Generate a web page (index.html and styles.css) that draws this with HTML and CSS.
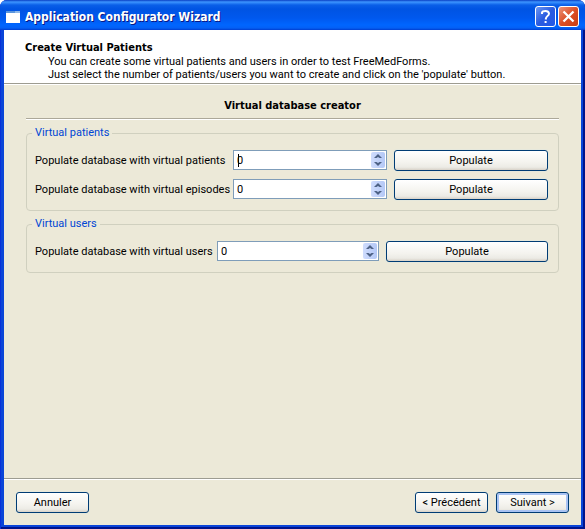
FILE: index.html
```html
<!DOCTYPE html>
<html lang="en">
<head>
<meta charset="utf-8">
<title>Application Configurator Wizard</title>
<link rel="stylesheet" href="styles.css">
</head>
<body>
<div class="window">
  <header class="titlebar">
    <svg class="app-icon" width="16" height="16" viewBox="0 0 16 16" aria-hidden="true">
      <rect x="1" y="2" width="14" height="12" fill="#fff"/>
      <rect x="1" y="2" width="14" height="2" fill="#8fb8e8"/>
      <rect x="1" y="2" width="9" height="2" fill="#5a95dd"/>
    </svg>
    <h1>Application Configurator Wizard</h1>
    <button class="caption help" type="button" aria-label="Help">
      <svg width="19" height="19" viewBox="0 0 19 19"><path d="M6 7V5.500Q6.500 4 9.500 4T13 6.500Q13 8 11.500 9T9.600 12.500M9.600 14v2" fill="none" stroke="#fff" stroke-width="2"/></svg>
    </button>
    <button class="caption close" type="button" aria-label="Close">
      <svg width="19" height="19" viewBox="0 0 19 19"><path d="M4.500 4.500l10 10M14.500 4.500l-10 10" stroke="#fff" stroke-width="2.300"/></svg>
    </button>
  </header>
  <form class="client">
    <div class="banner">
      <h2>Create Virtual Patients</h2>
      <p>You can create some virtual patients and users in order to test FreeMedForms.<br>Just select the number of patients/users you want to create and click on the 'populate' button.</p>
    </div>
    <main class="page">
      <h3>Virtual database creator</h3>
      <hr>
      <fieldset>
        <legend>Virtual patients</legend>
        <div class="rows patients">
          <label for="patients">Populate database with virtual patients</label>
          <div class="spin">
            <span class="caret"></span>
            <input id="patients" type="number" min="0" value="0">
            <button class="stepper" type="button" aria-label="Step patients"><svg width="14" height="16" viewBox="0 0 14 16"><path d="M3 6L7 2l4 4H8.500L7 5 5.500 6zM3 10l4 4 4-4H8.500L7 11 5.500 10z" fill="#4d6185"/></svg></button>
          </div>
          <button class="push" type="button">Populate</button>
          <label for="episodes">Populate database with virtual episodes</label>
          <div class="spin">
            <input id="episodes" type="number" min="0" value="0">
            <button class="stepper" type="button" aria-label="Step episodes"><svg width="14" height="16" viewBox="0 0 14 16"><path d="M3 6L7 2l4 4H8.500L7 5 5.500 6zM3 10l4 4 4-4H8.500L7 11 5.500 10z" fill="#4d6185"/></svg></button>
          </div>
          <button class="push" type="button">Populate</button>
        </div>
      </fieldset>
      <fieldset>
        <legend>Virtual users</legend>
        <div class="rows users">
          <label for="users">Populate database with virtual users</label>
          <div class="spin">
            <input id="users" type="number" min="0" value="0">
            <button class="stepper" type="button" aria-label="Step users"><svg width="14" height="16" viewBox="0 0 14 16"><path d="M3 6L7 2l4 4H8.500L7 5 5.500 6zM3 10l4 4 4-4H8.500L7 11 5.500 10z" fill="#4d6185"/></svg></button>
          </div>
          <button class="push" type="button">Populate</button>
        </div>
      </fieldset>
    </main>
    <footer class="actions">
      <button class="push cancel" type="button">Annuler</button>
      <button class="push" type="button">&lt; Précédent</button>
      <button class="push default" type="button">Suivant &gt;</button>
    </footer>
  </form>
</div>
</body>
</html>
```
FILE: styles.css
```css
* {
  box-sizing: border-box;
}

body {
  margin: 0;
  background: #fff;
  color: #000;
  font: 11px/13px Tahoma, Roboto, sans-serif;
}

h1, h2, h3, p {
  margin: 0;
}

button, input {
  font: inherit;
  color: inherit;
}

.window {
  display: flex;
  flex-direction: column;
  min-height: 100vh;
  padding: 0 4px 4px;
  border-radius: 7px 7px 0 0;
  background: #0a45d8;
  box-shadow: inset 1px 0 #0831d9, inset -2px -2px #00138c;
  overflow: hidden;
}

.titlebar {
  display: flex;
  align-items: center;
  gap: 4px;
  height: 30px;
  margin: 0 -4px;
  padding: 3px 5px 0 5px;
  background: linear-gradient(#0a3fc4 0, #3d95ff 2px, #0a5fe8 5px, #0054e3 9px, #0058ee 18px, #0066ff 25px, #0460f5 28px, #003dd0 30px);
}

.app-icon {
  flex: none;
}

.titlebar h1 {
  flex: 1;
  color: #fff;
  font: bold 12px/16px "Trebuchet MS", "DejaVu Sans Condensed", sans-serif;
  text-shadow: 1px 1px #0a1883;
  white-space: nowrap;
}

.caption {
  width: 21px;
  height: 21px;
  padding: 0;
  border: 1px solid #fff;
  border-radius: 3px;
  background: linear-gradient(135deg, #6c97f2, #2a5be0 50%, #2358e8);
}

.caption svg {
  display: block;
}

.close {
  margin-right: 1px;
  margin-left: -2px;
  background: linear-gradient(135deg, #ec9379, #dc4f27 50%, #c93d12);
}

.client {
  display: flex;
  flex: 1;
  flex-direction: column;
  background: #ece9d8;
}

.banner {
  padding: 11px 21px 2px;
  border-bottom: 1px solid #9d9c91;
  background: #fff;
  box-shadow: 0 1px #fff;
}

.banner h2 {
  font: bold 11px/14px Tahoma, "DejaVu Sans Condensed", sans-serif;
}

.banner p {
  padding-left: 23px;
  white-space: nowrap;
}

.page {
  flex: 1;
  padding: 14px 22px;
}

.page h3 {
  font: bold 11px/15px Tahoma, "DejaVu Sans Condensed", sans-serif;
  text-align: center;
}

hr {
  height: 2px;
  margin: 5px 0 6px;
  border: 0;
  border-top: 1px solid #aca899;
  border-bottom: 1px solid #fff;
}

fieldset {
  min-width: 0;
  margin: 0 0 6px;
  padding: 10px 10px 10px 8px;
  border: 1px solid #d0d0bf;
  border-radius: 4px;
}

legend {
  height: 14px;
  margin-left: -3px;
  padding: 0 3px;
  color: #0046d5;
  line-height: 14px;
}

.rows {
  display: grid;
  gap: 8px 7px;
  align-items: start;
}

.rows label {
  line-height: 21px;
  white-space: nowrap;
}

.patients {
  grid-template-columns: 191px minmax(0, 1fr) minmax(0, 1fr);
}

.users {
  grid-template-columns: 175px minmax(0, 1fr) minmax(0, 1fr);
}

.spin {
  position: relative;
  display: flex;
  height: 20px;
  padding: 1px;
  border: 1px solid #7f9db9;
  background: #fff;
}

.spin input {
  flex: 1;
  min-width: 0;
  padding: 0 2px;
  border: 0;
  outline: 0;
  background: none;
  appearance: textfield;
}

.spin input::-webkit-inner-spin-button {
  appearance: none;
}

.caret {
  position: absolute;
  top: 3px;
  left: 4px;
  width: 1px;
  height: 13px;
  background: #000;
}

.stepper {
  flex: none;
  width: 14px;
  height: 16px;
  padding: 0;
  border: 0;
  border-radius: 2px;
  background: linear-gradient(90deg, #cfdcfd, #b4c8f6);
}

.stepper svg {
  display: block;
}

.push {
  height: 21px;
  padding: 0;
  border: 1px solid #003c74;
  border-radius: 3px;
  background: linear-gradient(#fff, #f4f3ee 60%, #ecebe5 85%, #d8d2c8);
  box-shadow: 0 0 0 1px #e6e8dc;
  text-align: center;
  white-space: nowrap;
}

.actions {
  display: flex;
  gap: 8px;
  padding: 13px 12px 12px;
  border-top: 1px solid #9d9c91;
  box-shadow: inset 0 1px #fff;
}

.actions .push {
  width: 73px;
}

.actions .cancel {
  margin-right: auto;
}

.actions .default {
  box-shadow: inset 0 0 0 2px #a9c3f3, 0 0 0 1px #e6e8dc;
}
```
